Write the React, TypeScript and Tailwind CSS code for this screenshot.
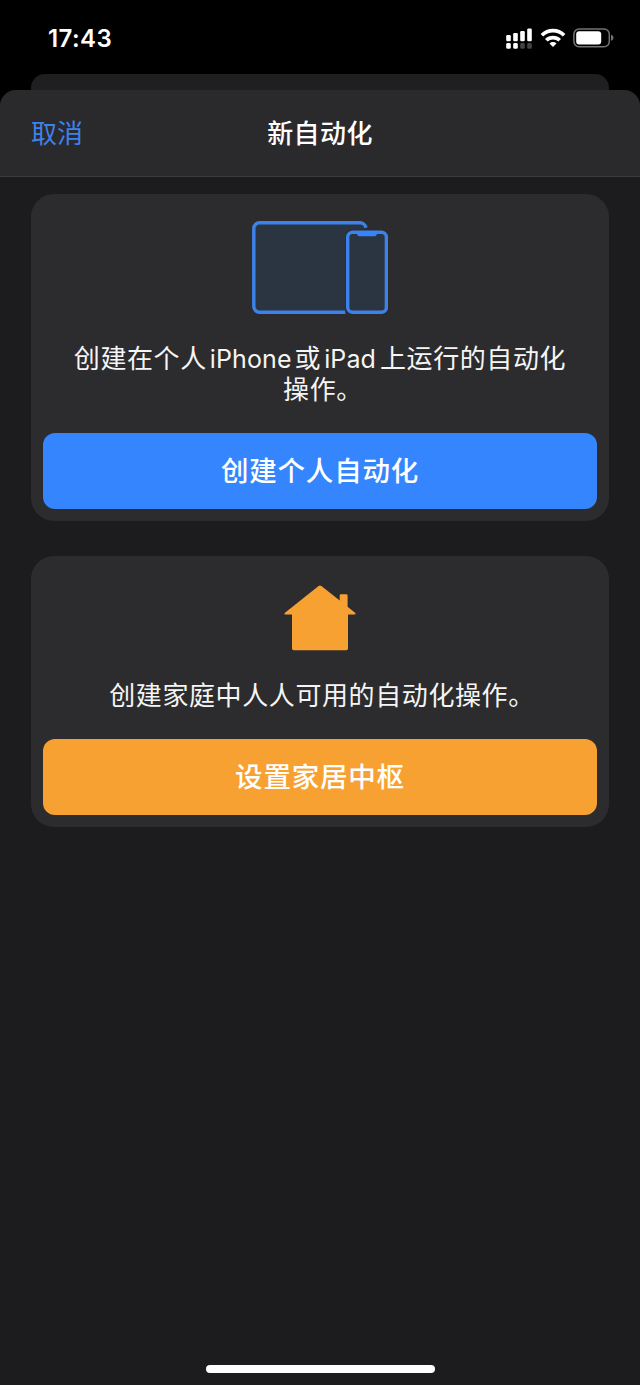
import type { ReactNode } from "react";

function SignalIcon() {
  return (
    <svg width="27" height="22" viewBox="0 0 27 22" fill="#fff">
      <rect x="0.2" y="7" width="4.6" height="6.3" rx="1.2" />
      <rect x="7.2" y="5" width="4.6" height="8.3" rx="1.2" />
      <rect x="14.2" y="3" width="4.6" height="10.3" rx="1.2" />
      <rect x="21.2" y="0.5" width="4.6" height="12.8" rx="1.2" />
      <rect x="0.2" y="15" width="4.6" height="5.8" rx="1.4" />
      <rect x="7.2" y="15" width="4.6" height="5.8" rx="1.4" />
      <rect x="14.2" y="15" width="4.6" height="5.8" rx="1.4" fill="#434343" />
      <rect x="21.2" y="15" width="4.6" height="5.8" rx="1.4" fill="#434343" />
    </svg>
  );
}

function WifiIcon() {
  return (
    <svg width="26" height="20" viewBox="0 0 26 20" fill="none" stroke="#fff" strokeWidth="3.7">
      <path d="M1.9 7.3a15.7 15.7 0 0 1 22.2 0" />
      <path d="M6.3 12.3a9.5 9.5 0 0 1 13.4 0" />
      <path d="M13 18.9l-3.5-3.5a4.9 4.9 0 0 1 7 0z" fill="#fff" stroke="none" />
    </svg>
  );
}

function BatteryIcon() {
  return (
    <svg width="41" height="20" viewBox="0 0 41 20" fill="none">
      <rect x="0.9" y="0.9" width="35.4" height="17.8" rx="5.2" stroke="#737373" strokeWidth="1.5" />
      <rect x="3.2" y="3.2" width="25" height="13.2" rx="3" fill="#fff" />
      <path d="M38 6.8c1.7.7 2.5 1.7 2.5 3s-.8 2.3-2.5 3z" fill="#737373" />
    </svg>
  );
}

function DevicesIcon() {
  return (
    <svg width="136" height="93" viewBox="0 0 136 93" fill="none">
      <path d="M95 91.2H7.5a5.7 5.7 0 0 1-5.7-5.7V7.5a5.7 5.7 0 0 1 5.7-5.7H108a5.7 5.7 0 0 1 5.7 5.7V10H95z" fill="#2b3541" />
      <path
        d="M93.5 91.2H7.5a5.7 5.7 0 0 1-5.7-5.7V7.5a5.7 5.7 0 0 1 5.7-5.7H108a6 6 0 0 1 6 5"
        stroke="#3d82ea"
        strokeWidth="3.4"
      />
      <rect x="93.2" y="8.5" width="46" height="88" rx="7" fill="#2c2c2e" />
      <rect x="95.7" y="11.2" width="38.7" height="80" rx="5" fill="#2b3541" stroke="#3d82ea" strokeWidth="3.4" />
      <path d="M104 10.5h22c-.8.5-.9 4.7-3 4.7h-16c-2.1 0-2.2-4.2-3-4.7z" fill="#3485fb" />
    </svg>
  );
}

function HouseIcon() {
  return (
    <svg width="72" height="66" viewBox="0 0 72 66" fill="#f8a133">
      <path d="M34.6.9q1.4-1 2.8 0L55.7 15.5V10.500q0-1.300 1.300-1.300h5.300q1.300 0 1.300 1.300V21.800L71 27.700q1.400 1.300-.5 1.900H64V63.500q0 1.800-1.800 1.800H9.800Q8 65.300 8 63.500V29.600H1.500Q-.4 29 1 27.700z" />
    </svg>
  );
}

function Card({ icon, text, children }: { icon: ReactNode; text: ReactNode; children: ReactNode }) {
  return (
    <section className="flex flex-col items-center rounded-[23px] bg-[#2c2c2e] px-3 pb-3">
      {icon}
      <p className="text-center text-[26px] leading-[31px] tracking-[0.6px] text-[#f5f5f5]">{text}</p>
      {children}
    </section>
  );
}

export default function App() {
  return (
    <div className="flex h-[1385px] w-[640px] flex-col overflow-hidden bg-black font-['Inter','Noto_Sans_CJK_SC',sans-serif]">
      <div className="flex h-[74px] shrink-0 items-start justify-between pl-12 pr-[26px]">
        <span className="mt-[23px] text-[24px] leading-[32px] font-semibold tracking-[0.4px] text-white">17:43</span>
        <div className="mt-7 flex items-start">
          <SignalIcon />
          <span className="ml-[7px]">
            <WifiIcon />
          </span>
          <span className="ml-[7px]">
            <BatteryIcon />
          </span>
        </div>
      </div>

      {/* sheet underneath */}
      <div className="mx-[31px] h-4 shrink-0 rounded-t-[14px] bg-[#1f1f21]" />

      <div className="flex flex-1 flex-col rounded-t-[16px] bg-[#1c1c1e]">
        <header className="grid h-[87px] shrink-0 grid-cols-3 items-center rounded-t-[16px] border-b border-[#3b3b3d] bg-[#2a2a2c] px-[31px] pt-px text-[26px]">
          <button className="justify-self-start text-[#3d82ea]">取消</button>
          <h1 className="justify-self-center font-medium tracking-[0.4px] whitespace-nowrap text-white">新自动化</h1>
        </header>

        <main className="flex flex-1 flex-col gap-[35px] px-[31px] pt-[17px]">
          <Card
            icon={
              <div className="mt-[27px] mb-[29px]">
                <DevicesIcon />
              </div>
            }
            text={
              <>
                创建在个人<span className="mr-[3px] ml-[3px] text-[25px] leading-6 tracking-[0.1px]">iPhone</span>或
                <span className="mr-[4px] ml-[3px] text-[25px] leading-6 tracking-[0.1px]">iPad</span>上运行的自动化
                <br />
                <span className="pl-[6px]">操作。</span>
              </>
            }
          >
            <button className="mt-7 h-[76px] w-full rounded-[12px] bg-[#3485fe] pt-[2px] text-[27.5px] font-medium tracking-[0.8px] text-white">
              创建个人自动化
            </button>
          </Card>

          <Card
            icon={
              <div className="mt-[29px] mb-[29px]">
                <HouseIcon />
              </div>
            }
            text={<span className="pl-1">创建家庭中人人可用的自动化操作。</span>}
          >
            <button className="mt-7 h-[76px] w-full rounded-[12px] bg-[#f8a133] pt-[2px] text-[27.5px] font-medium tracking-[0.8px] text-white">
              设置家居中枢
            </button>
          </Card>
        </main>

        <div className="mx-auto mb-3 h-2 w-[229px] shrink-0 rounded-full bg-white" />
      </div>
    </div>
  );
}
